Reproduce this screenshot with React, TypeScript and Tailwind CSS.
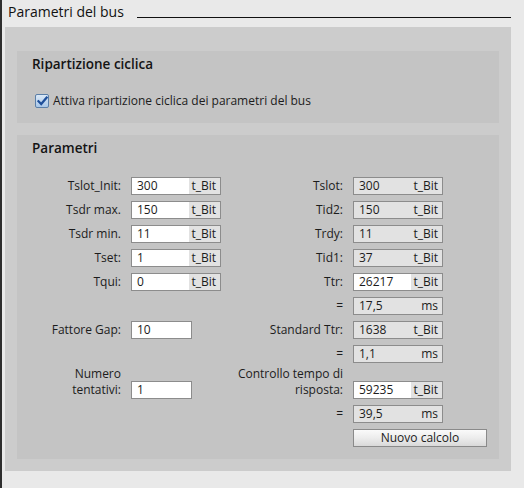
import React from 'react';

type Field = {
  value: string;
  unit?: string;
  editable?: boolean;
};

const ValueBox: React.FC<Field> = ({ value, unit, editable }) => {
  if (!unit) {
    return (
      <div className="h-[18px] w-[61px] border border-[#8c8c8c] bg-white pl-[5px] leading-[16px] text-[#1c1c1c]">
        {value}
      </div>
    );
  }
  return (
    <div className="flex h-[18px] w-[90px] border border-[#8c8c8c] bg-[#e2e2e2] leading-[16px] text-[#1c1c1c]">
      <div className={`flex-1 pl-[5px] ${editable ? 'bg-white' : ''}`}>{value}</div>
      <div className="w-[31px] pr-[4px] text-right">{unit}</div>
    </div>
  );
};

const Label: React.FC<{ children: React.ReactNode }> = ({ children }) => (
  <div className="flex h-[18px] items-center justify-end whitespace-nowrap text-[#1c1c1c]">{children}</div>
);

const leftRows: { label: string; value: string; unit: string }[] = [
  { label: 'Tslot_Init:', value: '300', unit: 't_Bit' },
  { label: 'Tsdr max.', value: '150', unit: 't_Bit' },
  { label: 'Tsdr min.', value: '11', unit: 't_Bit' },
  { label: 'Tset:', value: '1', unit: 't_Bit' },
  { label: 'Tqui:', value: '0', unit: 't_Bit' },
];

const rightRows: { label: string; value: string; unit: string; editable?: boolean }[] = [
  { label: 'Tslot:', value: '300', unit: 't_Bit' },
  { label: 'Tid2:', value: '150', unit: 't_Bit' },
  { label: 'Trdy:', value: '11', unit: 't_Bit' },
  { label: 'Tid1:', value: '37', unit: 't_Bit' },
  { label: 'Ttr:', value: '26217', unit: 't_Bit', editable: true },
];

function Checkbox() {
  return (
    <div className="flex h-[14px] w-[14px] items-center justify-center rounded-[2px] border border-[#5b7fa8] bg-gradient-to-b from-[#dbe9f7] to-[#a9c7e8]">
      <svg width="11" height="10" viewBox="0 0 11 10">
        <path d="M1.5 5.2 L4.2 8 L9.6 1.6" fill="none" stroke="#1f4f9a" strokeWidth="2.2" strokeLinecap="square" />
      </svg>
    </div>
  );
}

export default function App() {
  return (
    <div
      className="h-[488px] w-[524px] overflow-hidden border-l-2 border-[#2e2e2e] bg-[#e9e9e9] text-[12px]"
      style={{ fontFamily: '"Open Sans", "Noto Sans", sans-serif' }}
    >
      {/* header */}
      <div className="flex h-[27px] items-start pt-[3px]">
        <span className="ml-[6px] text-[14px] leading-[17px] text-[#111]">Parametri del bus</span>
        <div className="ml-[13px] mr-[13px] mt-[14px] h-px flex-1 bg-[#111]" />
      </div>

      <div className="ml-[3px] flex w-[506px] flex-col gap-[12px] bg-[#cccccc] px-[12px] pb-[12px] pt-[24px]">
        {/* Ripartizione ciclica */}
        <section className="h-[72px] bg-[#c4c4c4] px-[15px] pt-[4px]">
          <h2 className="text-[13.5px] font-semibold leading-[18px] text-[#141414]">Ripartizione ciclica</h2>
          <div className="mt-[20px] flex items-center gap-[4px] pl-[3px]">
            <Checkbox />
            <span className="leading-[16px] text-[#1c1c1c]">Attiva ripartizione ciclica dei parametri del bus</span>
          </div>
        </section>

        {/* Parametri */}
        <section className="h-[324px] bg-[#c4c4c4] px-[15px] pt-[4px]">
          <h2 className="text-[13.5px] font-semibold leading-[18px] text-[#141414]">Parametri</h2>
          <div className="mt-[20px] grid grid-cols-[89px_90px_112px_90px] gap-x-[10px] gap-y-[6px]">
            {leftRows.map((l, i) => (
              <React.Fragment key={l.label}>
                <Label>{l.label}</Label>
                <ValueBox value={l.value} unit={l.unit} editable />
                <Label>{rightRows[i].label}</Label>
                <ValueBox value={rightRows[i].value} unit={rightRows[i].unit} editable={rightRows[i].editable} />
              </React.Fragment>
            ))}

            <div />
            <div />
            <Label>=</Label>
            <ValueBox value="17,5" unit="ms" />

            <Label>Fattore Gap:</Label>
            <ValueBox value="10" />
            <Label>Standard Ttr:</Label>
            <ValueBox value="1638" unit="t_Bit" />

            <div />
            <div />
            <Label>=</Label>
            <ValueBox value="1,1" unit="ms" />

            <div className="flex h-[30px] items-end justify-end">
              <p className="mb-[1px] text-right leading-[16px] text-[#1c1c1c]">
                Numero
                <br />
                tentativi:
              </p>
            </div>
            <div className="flex items-end">
              <ValueBox value="1" />
            </div>
            <div className="flex h-[30px] items-end justify-end">
              <p className="mb-[1px] whitespace-nowrap text-right leading-[16px] text-[#1c1c1c]">
                Controllo tempo di
                <br />
                risposta:
              </p>
            </div>
            <div className="flex items-end">
              <ValueBox value="59235" unit="t_Bit" editable />
            </div>

            <div />
            <div />
            <Label>=</Label>
            <ValueBox value="39,5" unit="ms" />

            <div />
            <div />
            <div />
            <button className="h-[18px] w-[134px] border border-[#8a8a8a] bg-gradient-to-b from-[#fafafa] via-[#ececec] to-[#d9d9d9] leading-[16px] text-[#1c1c1c]">
              Nuovo calcolo
            </button>
          </div>
        </section>
      </div>
    </div>
  );
}
